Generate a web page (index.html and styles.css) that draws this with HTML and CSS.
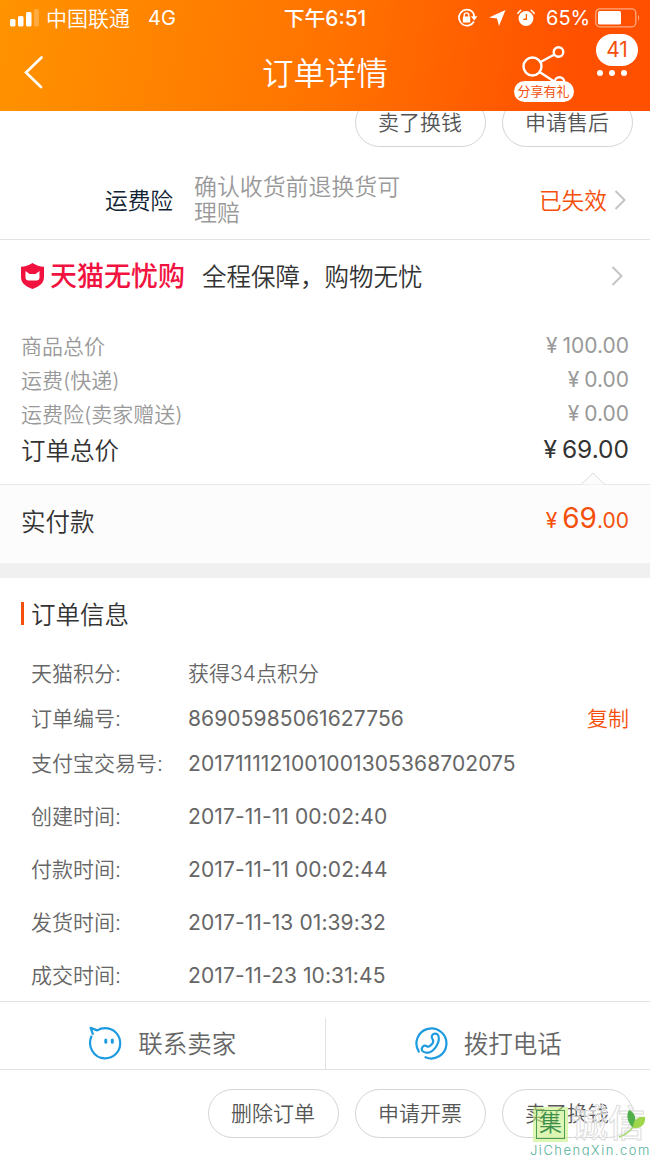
FILE: index.html
```html
<!DOCTYPE html>
<html lang="zh-CN">

<head>
  <meta charset="UTF-8">
  <title>订单详情</title>
  <link rel="stylesheet" href="styles.css">
</head>

<body>

  <header class="header">
    <div class="status">
      <div class="status-left">
        <svg class="signal" width="30" height="18" viewBox="0 0 30 18" fill="#fff">
          <rect x="0" y="10" width="5.500" height="7.500" rx="1.5" />
          <rect x="8" y="7" width="5.500" height="10.500" rx="1.5" />
          <rect x="16" y="3" width="5.500" height="14.500" rx="1.5" />
          <rect x="24" y="0" width="5" height="17.500" rx="1.5" opacity=".25" />
        </svg>
        <span class="carrier">中国联通</span>
        <span class="network">4G</span>
      </div>
      <div class="clock">下午6:51</div>
      <div class="status-right">
        <svg width="21" height="20" viewBox="0 0 21 20" fill="none" stroke="#fff" stroke-width="1.7">
          <path d="M15.4 3.8A8 8 0 1 0 17 13.5M15.4 3.8A8 8 0 0 1 17.2 9" />
          <path d="M14 8.2h6.4l-3.2 4.2z" fill="#fff" stroke="none" />
          <rect x="5.8" y="8.5" width="7.4" height="6" rx=".6" fill="#fff" stroke="none" />
          <path d="M7.2 9V7.2a2.3 2.3 0 0 1 4.6 0V9" stroke-width="1.4" />
        </svg>
        <svg class="location" width="18" height="18" viewBox="0 0 18 18" fill="#fff">
          <path d="M17.500 1L11 17 9 9.600 1 8.600z" />
        </svg>
        <svg class="alarm" width="20" height="19" viewBox="0 0 20 19" fill="none" stroke="#fff" stroke-linecap="round">
          <circle cx="10" cy="9.500" r="7.4" fill="#fff" stroke="none" />
          <path d="M1.800 4.4A9 9 0 0 1 4.800 1.400M18.200 4.4A9 9 0 0 0 15.200 1.400" stroke-width="1.500" />
          <path d="M10.400 5.500v4.800H7.800" stroke="#ff6a00" stroke-width="1.4" />
        </svg>
        <span class="percent">65%</span>
        <svg class="battery" width="46" height="20" viewBox="0 0 46 20" fill="none">
          <rect x=".8" y=".8" width="40" height="18" rx="4" stroke="#fff" stroke-opacity=".5" stroke-width="1.3" />
          <rect x="3" y="3" width="23" height="13.6" rx="1.5" fill="#fff" />
          <path d="M43 6.5q2.3 3.3 0 6.600z" fill="#fff" fill-opacity=".5" />
        </svg>
      </div>
    </div>

    <div class="nav">
      <svg class="back" width="20" height="34" viewBox="0 0 20 34" fill="none" stroke="#fff" stroke-width="2.6" stroke-linecap="round">
        <path d="M18.500 2.500L3 17.500 18 32" />
      </svg>
      <h1>订单详情</h1>
      <div class="share">
        <svg width="46" height="42" viewBox="0 0 46 42" fill="none" stroke="#fff" stroke-width="2.4">
          <circle cx="10.500" cy="21.500" r="9" />
          <circle cx="36.500" cy="7" r="4.800" />
          <circle cx="37.500" cy="37" r="4.800" />
          <path d="M18.500 17l14-7.500M17.500 27l15.500 10" />
        </svg>
        <span class="share-tag">分享有礼</span>
      </div>
      <div class="more">
        <span class="badge">41</span>
        <div class="dots"><i></i><i></i><i></i></div>
      </div>
    </div>
  </header>

  <div class="item-actions">
    <button>卖了换钱</button>
    <button>申请售后</button>
  </div>

  <div class="insurance">
    <span class="insurance-name">运费险</span>
    <p>确认收货前退换货可理赔</p>
    <span class="invalid">已失效</span>
    <svg class="arrow" width="12" height="20" viewBox="0 0 12 20"><path d="M1.500 1l9 9-9 9" /></svg>
  </div>

  <div class="guarantee">
    <svg class="shield" width="25" height="28" viewBox="0 0 25 28">
      <path d="M12.500 1C9 3.500 5 4.500 1 4.700V15c0 6.500 5 9.500 11.500 12C19 24.500 24 21.500 24 15V4.700C20 4.500 16 3.500 12.500 1z" fill="#f2123f" />
      <path d="M5.500 9l4 3h6l4-3v6.500c0 2-1.200 3-3 3h-8c-1.800 0-3-1-3-3z" fill="#fff" />
    </svg>
    <strong>天猫无忧购</strong>
    <span>全程保障，购物无忧</span>
    <svg class="arrow" width="12" height="20" viewBox="0 0 12 20"><path d="M1.500 1l9 9-9 9" /></svg>
  </div>

  <div class="prices">
    <div class="price"><span>商品总价</span><b><i>¥</i>100.00</b></div>
    <div class="price"><span>运费(快递)</span><b><i>¥</i>0.00</b></div>
    <div class="price"><span>运费险(卖家赠送)</span><b><i>¥</i>0.00</b></div>
    <div class="price total"><span>订单总价</span><b><i>¥</i>69.00</b></div>
  </div>

  <div class="paid">
    <svg class="notch" width="24" height="13" viewBox="0 0 24 13"><path d="M0 12.500L12 1l12 11.500" fill="#fcfcfc" stroke="#dcdcdc" /></svg>
    <span>实付款</span>
    <b><i>¥</i><em>69</em>.00</b>
  </div>

  <section class="info">
    <h2>订单信息</h2>
    <div class="row"><span>天猫积分:</span><p class="points">获得34点积分</p></div>
    <div class="row"><span>订单编号:</span><p>86905985061627756</p><a>复制</a></div>
    <div class="row"><span>支付宝交易号:</span><p>2017111121001001305368702075</p></div>
    <div class="times">
      <div class="row"><span>创建时间:</span><p>2017-11-11 00:02:40</p></div>
      <div class="row"><span>付款时间:</span><p>2017-11-11 00:02:44</p></div>
      <div class="row"><span>发货时间:</span><p>2017-11-13 01:39:32</p></div>
      <div class="row"><span>成交时间:</span><p>2017-11-23 10:31:45</p></div>
    </div>
  </section>

  <div class="contact">
    <div class="contact-item">
      <svg width="34" height="34" viewBox="0 0 34 34" fill="none" stroke="#1e9be0" stroke-width="2.200" stroke-linejoin="round" stroke-linecap="round">
        <path d="M3.400 10.500C-.8 20 5.500 32.300 17 32.300c8.500 0 15.200-6.500 15.200-15C32.200 8.500 25.500 2.200 17 2.200c-2.900 0-5.500.8-7.700 2.200L2.600 1.900l2.200 6" />
        <path d="M17.800 14v2.200M24.300 14v2.200" stroke-width="3" />
      </svg>
      <span>联系卖家</span>
    </div>
    <div class="contact-item">
      <svg width="34" height="34" viewBox="0 0 34 34" fill="none" stroke="#1e9be0" stroke-width="2.200" stroke-linejoin="round" stroke-linecap="round">
        <path d="M4.800 25.500A15 15 0 1 1 11.500 31.200" />
        <path d="M17.800 10c.8-2.800 5-3.200 6.400-.6 2.400 5.300-2.800 14.600-8.400 16.800-2.700 1-6.500.3-7.700-1.700-1.200-2.200.9-5.200 3.200-4.800 1.500.2 2.200 1.600 3.600.8 2.300-1.300 4.300-3.400 4.300-5.500 0-1.600-2-3-1.400-5z" />
      </svg>
      <span>拨打电话</span>
    </div>
  </div>

  <footer class="footer">
    <button>删除订单</button>
    <button>申请开票</button>
    <button>卖了换钱</button>
    <div class="watermark">
      <div class="mark-top">
        <span class="mark-ji">集</span>
        <span class="mark-name">诚信</span>
        <svg class="leaf" width="28" height="29" viewBox="0 0 28 29">
          <path d="M15 19C9 13 8 6 11 1c7 3 8 10 4 18z" fill="#52b04c" />
          <path d="M15 19c0-8 5-12 12-11 1 7-4 12-12 11z" fill="#9fd64b" />
          <path d="M15 18Q10 25 1 28" fill="none" stroke="#a6d873" stroke-width="1.500" />
        </svg>
      </div>
      <div class="mark-url">JiChengXin.com</div>
    </div>
  </footer>

</body>

</html>
```
FILE: styles.css
```css
* {
  box-sizing: border-box;
}

body {
  margin: 0;
  width: 650px;
  height: 1156px;
  overflow: hidden;
  font-family: Inter, "Noto Sans CJK SC", sans-serif;
  font-size: 21px;
  font-weight: 350;
  color: #666;
  background: #fff;
}

h1,
h2,
p {
  margin: 0;
  font-weight: 350;
}

i,
em {
  font-style: normal;
}

svg {
  display: block;
  flex: none;
}

button {
  width: 131px;
  height: 49px;
  padding: 0 1px 3px 0;
  border: 1px solid #d4d4d4;
  border-radius: 25px;
  background: #fff;
  font: inherit;
  color: #555;
}

/* header */
.header {
  height: 111px;
  color: #fff;
  background: linear-gradient(100deg, #ff9300 0%, #ff7300 50%, #ff5000 88%);
}

.status {
  height: 36px;
  display: grid;
  grid-template-columns: 1fr auto 1fr;
  align-items: center;
}

.status-left {
  display: flex;
  align-items: center;
  padding-left: 10px;
}

.carrier {
  margin-left: 6px;
  padding-bottom: 3px;
}

.network {
  margin-left: 18px;
  font-size: 20px;
  font-weight: 400;
}

.clock {
  padding-bottom: 3px;
  font-size: 20.800px;
  font-weight: 450;
}

.status-right {
  display: flex;
  align-items: center;
  justify-content: flex-end;
  padding-right: 9px;
}

.location {
  margin-left: 10px;
}

.alarm {
  margin-left: 10px;
}

.percent {
  width: 42px;
  margin: 0 7px 0 10px;
  font-size: 20px;
  font-weight: 400;
}

.nav {
  height: 75px;
  display: grid;
  grid-template-columns: 262px 1fr 61px 75px;
}

.back {
  margin: 19px 0 0 23px;
}

.nav h1 {
  font-size: 31.5px;
  line-height: 75px;
}

.share {
  padding-top: 9px;
  display: flex;
  flex-direction: column;
  align-items: center;
}

.share-tag {
  width: 60px;
  height: 21px;
  margin: -6px 2px 0 0;
  border-radius: 11px;
  background: #fff;
  color: #f4500c;
  font-size: 13px;
  font-weight: 400;
  line-height: 20px;
  text-align: center;
  z-index: 1;
}

.more {
  padding-left: 21px;
}

.badge {
  display: block;
  width: 42px;
  height: 32px;
  margin-top: -2px;
  border-radius: 16px;
  background: #fff;
  color: #f4500c;
  font-size: 21px;
  font-weight: 400;
  line-height: 32px;
  text-align: center;
}

.dots {
  display: flex;
  gap: 6px;
  margin: 4px 0 0 1px;
}

.dots i {
  width: 6px;
  height: 6px;
  border-radius: 50%;
  background: #fff;
}

/* only the lower part of these buttons shows under the header */
.item-actions {
  height: 36px;
  padding-right: 17px;
  display: flex;
  justify-content: flex-end;
  align-items: flex-end;
  gap: 16px;
  overflow: hidden;
}

.insurance {
  height: 93px;
  padding: 13px 24px 0 105px;
  display: flex;
  align-items: center;
  border-bottom: 1px solid #e2e2e2;
  font-size: 22.7px;
}

.insurance-name {
  color: #0e2233;
}

.insurance p {
  width: 212px;
  margin: 1px 0 0 21px;
  line-height: 26.500px;
  font-size: 22.900px;
  color: #999;
}

.invalid {
  margin-left: auto;
  color: #f4500c;
}

.arrow {
  margin-left: 7px;
  fill: none;
  stroke: #c4c4c4;
  stroke-width: 2;
}

.guarantee {
  height: 73px;
  padding: 0 27px 0 20px;
  display: flex;
  align-items: center;
  font-size: 24.500px;
  color: #333;
}

.guarantee strong {
  margin-left: 5px;
  padding-bottom: 4px;
  font-size: 27px;
  font-weight: 500;
  color: #f2123f;
}

.guarantee span {
  margin-left: 17px;
  padding-bottom: 3px;
}

.shield {
  margin-bottom: 2px;
}

.guarantee .arrow {
  margin: 0 0 2px auto;
}

/* prices */
.prices {
  height: 171px;
  padding: 17px 21px 0;
}

.price {
  height: 34px;
  display: flex;
  justify-content: space-between;
  align-items: center;
  color: #999;
}

.price span {
  padding-bottom: 4px;
}

.price b,
.paid b {
  padding-bottom: 4px;
  font-weight: 400;
}

.price i,
.paid i {
  margin-right: 5px;
}

.total {
  height: 37px;
  font-size: 24.500px;
  color: #333;
}

.total span {
  padding-bottom: 3px;
}

.paid {
  position: relative;
  height: 79px;
  padding: 0 21px 8px;
  display: flex;
  justify-content: space-between;
  align-items: center;
  border-top: 1px solid #e8e8e8;
  background: #fcfcfc;
  font-size: 24.500px;
  color: #333;
}

.paid b {
  font-size: 21px;
  color: #f4500c;
}

.paid em {
  font-size: 28px;
}

.notch {
  position: absolute;
  top: -13px;
  right: 45px;
}

/* order info */
.info {
  height: 438px;
  padding: 15px 21px 0;
  border-top: 15px solid #f0f0f0;
}

.info h2 {
  height: 45px;
  margin-bottom: 13px;
  padding-bottom: 4px;
  display: flex;
  align-items: center;
  font-size: 24.500px;
  color: #333;
}

.info h2::before {
  content: "";
  width: 3px;
  height: 23px;
  margin-right: 7px;
  background: #f4500c;
}

.row {
  height: 45px;
  padding-left: 10px;
  display: flex;
  align-items: center;
}

.row span {
  width: 157px;
  padding-bottom: 4px;
}

.row p {
  font-weight: 400;
  letter-spacing: 0.1px;
}

.row .points {
  padding-bottom: 4px;
  font-weight: 350;
  letter-spacing: 0;
}

.row a {
  margin-left: auto;
  padding-bottom: 4px;
  color: #f4500c;
}

.times {
  padding-top: 4px;
}

.times .row {
  height: 53px;
}

/* contact */
.contact {
  height: 69px;
  padding-top: 16px;
  display: flex;
  border-top: 1px solid #e2e2e2;
  border-bottom: 1px solid #e2e2e2;
}

.contact-item {
  flex: 1;
  padding-bottom: 1px;
  display: flex;
  justify-content: center;
  align-items: center;
  gap: 16px;
  font-size: 24.500px;
}

.contact-item span {
  padding-bottom: 2px;
}

.contact-item + .contact-item {
  border-left: 1px solid #e2e2e2;
}

.footer {
  position: relative;
  height: 87px;
  padding: 19px 17px 0 0;
  display: flex;
  justify-content: flex-end;
  gap: 16px;
}

.watermark {
  position: absolute;
  right: 0;
  bottom: 0;
  width: 120px;
}

.mark-top {
  display: flex;
  align-items: center;
}

.mark-ji {
  width: 29px;
  height: 29px;
  margin-left: 6px;
  border: 1.500px solid #4d9a55;
  outline: 3px solid rgba(200, 240, 130, 0.6);
  background: rgba(200, 240, 130, 0.6);
  color: #3f8f4c;
  font-size: 23px;
  font-weight: 350;
  line-height: 24px;
  text-align: center;
}

.mark-name {
  margin-left: 6px;
  font-size: 37px;
  font-weight: 500;
  line-height: 38px;
  color: rgba(255, 255, 255, 0.5);
  -webkit-text-stroke: 1px #ddd;
}

.leaf {
  position: absolute;
  top: 4px;
  right: 4px;
}

.mark-url {
  font-size: 13px;
  line-height: 14px;
  letter-spacing: 1.500px;
  color: #55b09a;
}
```
